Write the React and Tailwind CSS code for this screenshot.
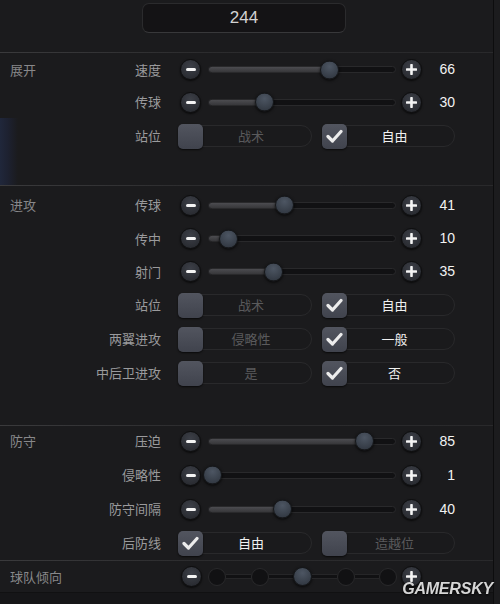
import React from "react";

const cjk = "font-['Noto_Sans_CJK_SC','Noto_Sans',sans-serif]";
const latin = "font-['Liberation_Sans',Arial,sans-serif]";

// 圆形 +/- 按钮
function RoundBtn({ plus }) {
  return (
    <div className="w-[21px] h-[21px] shrink-0 rounded-full bg-[radial-gradient(circle_at_50%_35%,#3d4048,#23252a)] border border-[#0d0d0e] shadow-[0_1px_2px_rgba(0,0,0,0.7)] flex items-center justify-center">
      {plus ? (
        <svg width="11" height="11" viewBox="0 0 11 11">
          <path d="M5.5 1v9M1 5.5h9" stroke="#f4f4f4" strokeWidth="2.6" strokeLinecap="round" />
        </svg>
      ) : (
        <div className="w-[10px] h-[3px] rounded-sm bg-[#f4f4f4]" />
      )}
    </div>
  );
}

function Thumb() {
  return (
    <div className="w-[19px] h-[19px] rounded-full bg-[radial-gradient(circle_at_50%_30%,#4d5663,#2c323b)] border border-[#15171a] shadow-[0_1px_3px_rgba(0,0,0,0.8)]" />
  );
}

function Slider({ value }) {
  const center = 1.2 + 1.81 * value;
  return (
    <div className="flex items-center">
      <div className="ml-[2px]">
        <RoundBtn />
      </div>
      <div className="relative ml-[7px] w-[188px] h-[7px] rounded-full bg-[#111113] border border-[#29292b]">
        <div
          className="absolute left-0 top-0 bottom-0 rounded-full bg-[linear-gradient(to_bottom,#4c4c50,#37373a)]"
          style={{ width: center }}
        />
        <div className="absolute top-1/2 -translate-y-1/2" style={{ left: center - 9.5 }}>
          <Thumb />
        </div>
      </div>
      <div className="ml-[5px]">
        <RoundBtn plus />
      </div>
      <div className={`w-[33px] text-right text-[14px] text-[#f2f2f2] ${latin}`}>{value}</div>
    </div>
  );
}

function Check({ on }) {
  return (
    <div className="relative z-10 w-[25px] h-[25px] shrink-0 rounded-[5px] bg-[linear-gradient(to_bottom,#52555f,#40434d)] shadow-[0_1px_2px_rgba(0,0,0,0.7)] flex items-center justify-center">
      {on && (
        <svg width="17" height="14" viewBox="0 0 17 14">
          <path d="M2 7.5l4.5 4.5L15 2.5" fill="none" stroke="#ececec" strokeWidth="3.2" strokeLinecap="round" strokeLinejoin="round" />
        </svg>
      )}
    </div>
  );
}

function Option({ on, text, w }) {
  return (
    <div className="flex items-center">
      <Check on={on} />
      <div
        className={`-ml-[13px] ${w} h-[22px] rounded-full border border-[#29292b] bg-[#1a1a1c] flex items-center justify-center text-[13px] ${cjk} ${
          on ? "text-[#f0f0f0]" : "text-[#5a5a5c]"
        }`}
      >
        {text}
      </div>
    </div>
  );
}

function Choice({ first, second, pick }) {
  return (
    <div className="flex items-center">
      <Option on={pick === 0} text={first} w="w-[122px]" />
      <div className="ml-[10px]">
        <Option on={pick === 1} text={second} w="w-[121px]" />
      </div>
    </div>
  );
}

function Stepper({ pos }) {
  const dots = [0, 1, 2, 3, 4];
  return (
    <div className="flex items-center">
      <div className="ml-[3px]">
        <RoundBtn />
      </div>
      <div className="ml-[6px] w-[189px] flex items-center">
        {dots.map((i) => (
          <React.Fragment key={i}>
            {i > 0 && <div className="flex-1 h-[5px] bg-[#111113] border-y border-[#262628]" />}
            {i === pos ? (
              <Thumb />
            ) : (
              <div className="w-[18px] h-[18px] rounded-full bg-[#111113] border border-[#29292b]" />
            )}
          </React.Fragment>
        ))}
      </div>
      <div className="ml-[4px]">
        <RoundBtn plus />
      </div>
    </div>
  );
}

function Row({ header, label, children, h = "h-[34px]" }) {
  return (
    <div className={`flex items-center ${h}`}>
      <div className={`w-[161px] flex justify-between items-center pl-[10px] text-[13px] ${cjk}`}>
        <span className="text-[#88888a]">{header}</span>
        <span className="text-[#9a9a9c]">{label}</span>
      </div>
      <div className="ml-[17px]">{children}</div>
    </div>
  );
}

function Line() {
  return <div className="h-px bg-[linear-gradient(to_right,#3a3a3c,#2c2c2e_40%,#29292b)]" />;
}

export default function App() {
  return (
    <div className="relative w-[500px] h-[604px] flex bg-[#1b1b1d] overflow-hidden">
      <div className="w-[493px] flex flex-col">
        {/* 顶部总值 */}
        <div className="h-[52px] pt-[3px] flex justify-center">
          <div className="ml-[-5px] w-[204px] h-[30px] rounded-[7px] bg-[#141315] border border-[#2b2b2d] border-b-[#38383a] flex items-center justify-center">
            <span className={`text-[17px] text-[#d2d2d2] ${latin}`}>244</span>
          </div>
        </div>

        <Line />
        <div className="h-[132px] flex flex-col">
          <Row header="展开" label="速度" h="h-[33px]">
            <Slider value={66} />
          </Row>
          <Row label="传球" h="h-[32px]">
            <Slider value={30} />
          </Row>
          <div className="flex-1 bg-[linear-gradient(to_right,#20273b,#1d2130_8px,#1b1b1d_18px)]">
            <Row label="站位" h="h-[36px]">
              <Choice first="战术" second="自由" pick={1} />
            </Row>
          </div>
        </div>

        <Line />
        <div className="h-[239px] pt-[2px]">
          <Row header="进攻" label="传球">
            <Slider value={41} />
          </Row>
          <Row label="传中" h="h-[33px]">
            <Slider value={10} />
          </Row>
          <Row label="射门" h="h-[33px]">
            <Slider value={35} />
          </Row>
          <Row label="站位">
            <Choice first="战术" second="自由" pick={1} />
          </Row>
          <Row label="两翼进攻">
            <Choice first="侵略性" second="一般" pick={1} />
          </Row>
          <Row label="中后卫进攻">
            <Choice first="是" second="否" pick={1} />
          </Row>
        </div>

        <Line />
        <div className="h-[136px] -mt-[2px]">
          <Row header="防守" label="压迫">
            <Slider value={85} />
          </Row>
          <Row label="侵略性">
            <Slider value={1} />
          </Row>
          <Row label="防守间隔">
            <Slider value={40} />
          </Row>
          <Row label="后防线">
            <Choice first="自由" second="造越位" pick={0} />
          </Row>
        </div>

        <Line />
        <Row header="球队倾向" h="h-[31px]">
          <Stepper pos={2} />
        </Row>
        <div className="flex-1 border-t border-[#111112] bg-[#161618]" />
      </div>
      <div className="w-px bg-[#0d0d0e]" />
      <div className="flex-1 bg-[#1c1c1e]" />

      {/* 水印 */}
      <div
        className={`absolute right-[7px] bottom-[3px] text-[16px] font-bold italic tracking-[-0.2px] text-[#d6d6d6] drop-shadow-[0_1px_1px_rgba(0,0,0,0.9)] ${latin}`}
      >
        GAMERSKY
      </div>
    </div>
  );
}
